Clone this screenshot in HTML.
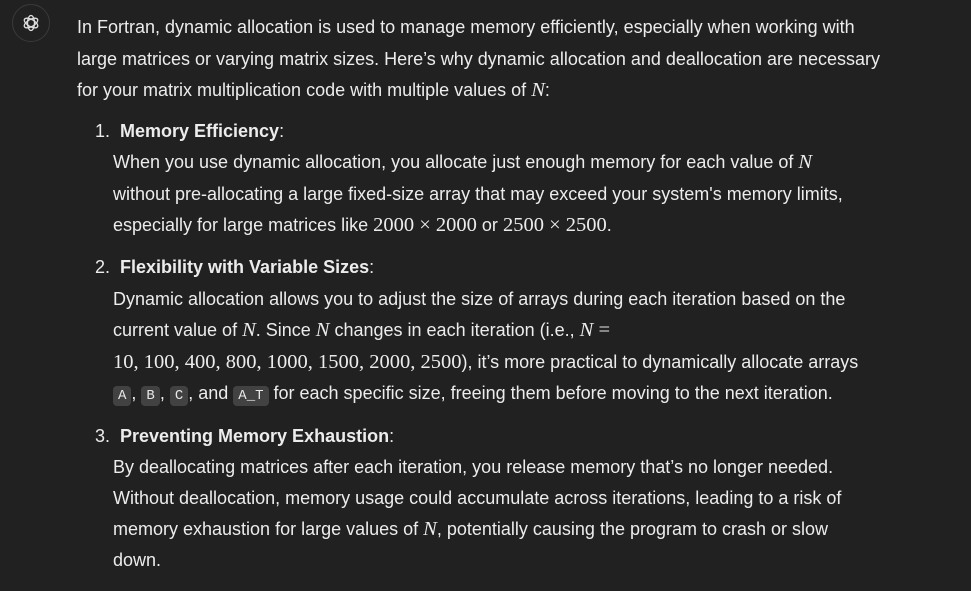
<!DOCTYPE html>
<html><head><meta charset="utf-8"><style>
html,body{margin:0;padding:0;background:#212121;width:971px;height:591px;overflow:hidden}
body{position:relative;font-family:"Liberation Sans",sans-serif;font-size:18px;color:#ececec}
.l{position:absolute;white-space:nowrap;line-height:22px}
.m{font-family:"Liberation Serif",serif;font-size:20.5px}
.i{font-style:italic}
b{font-weight:bold}
code{font-family:"Liberation Mono",monospace;font-size:14px;background:#424242;border-radius:4px;padding:2px 5px;color:#e8e8e8}
.logo{position:absolute;left:12px;top:4px;width:38px;height:38px;border:1px solid #3a3a3a;border-radius:50%;box-sizing:border-box}
</style></head><body>
<div class="logo"><svg width="36" height="36" viewBox="0 0 36 36"><g fill="none" stroke="#ddd" stroke-width="1.3"><ellipse cx="18" cy="18" rx="3.5" ry="7.5"/><ellipse cx="18" cy="18" rx="3.5" ry="7.5" transform="rotate(60 18 18)"/><ellipse cx="18" cy="18" rx="3.5" ry="7.5" transform="rotate(120 18 18)"/></g></svg></div>
<div class="l" style="left:77px;top:16px">In Fortran, dynamic allocation is used to manage memory efficiently, especially when working with</div>
<div class="l" style="left:77px;top:48px">large matrices or varying matrix sizes. Here’s why dynamic allocation and deallocation are necessary</div>
<div class="l" style="left:77px;top:79px">for your matrix multiplication code with multiple values of <span class="m i">N</span>:</div>

<div class="l" style="left:95px;top:120px">1.&nbsp; <b>Memory Efficiency</b>:</div>
<div class="l" style="left:113px;top:151px">When you use dynamic allocation, you allocate just enough memory for each value of <span class="m i">N</span></div>
<div class="l" style="left:113px;top:183px">without pre-allocating a large fixed-size array that may exceed your system's memory limits,</div>
<div class="l" style="left:113px;top:214px">especially for large matrices like <span class="m">2000 × 2000</span> or <span class="m">2500 × 2500</span>.</div>

<div class="l" style="left:95px;top:256px">2.&nbsp; <b>Flexibility with Variable Sizes</b>:</div>
<div class="l" style="left:113px;top:288px">Dynamic allocation allows you to adjust the size of arrays during each iteration based on the</div>
<div class="l" style="left:113px;top:319px">current value of <span class="m i">N</span>. Since <span class="m i">N</span> changes in each iteration (i.e., <span class="m"><i>N</i> =</span></div>
<div class="l" style="left:113px;top:351px"><span class="m">10, 100, 400, 800, 1000, 1500, 2000, 2500</span>), it’s more practical to dynamically allocate arrays</div>
<div class="l" style="left:113px;top:382px"><code>A</code>, <code>B</code>, <code>C</code>, and <code>A_T</code> for each specific size, freeing them before moving to the next iteration.</div>

<div class="l" style="left:95px;top:425px">3.&nbsp; <b>Preventing Memory Exhaustion</b>:</div>
<div class="l" style="left:113px;top:456px">By deallocating matrices after each iteration, you release memory that’s no longer needed.</div>
<div class="l" style="left:113px;top:487px">Without deallocation, memory usage could accumulate across iterations, leading to a risk of</div>
<div class="l" style="left:113px;top:518px">memory exhaustion for large values of <span class="m i">N</span>, potentially causing the program to crash or slow</div>
<div class="l" style="left:113px;top:549px">down.</div>
</body></html>
